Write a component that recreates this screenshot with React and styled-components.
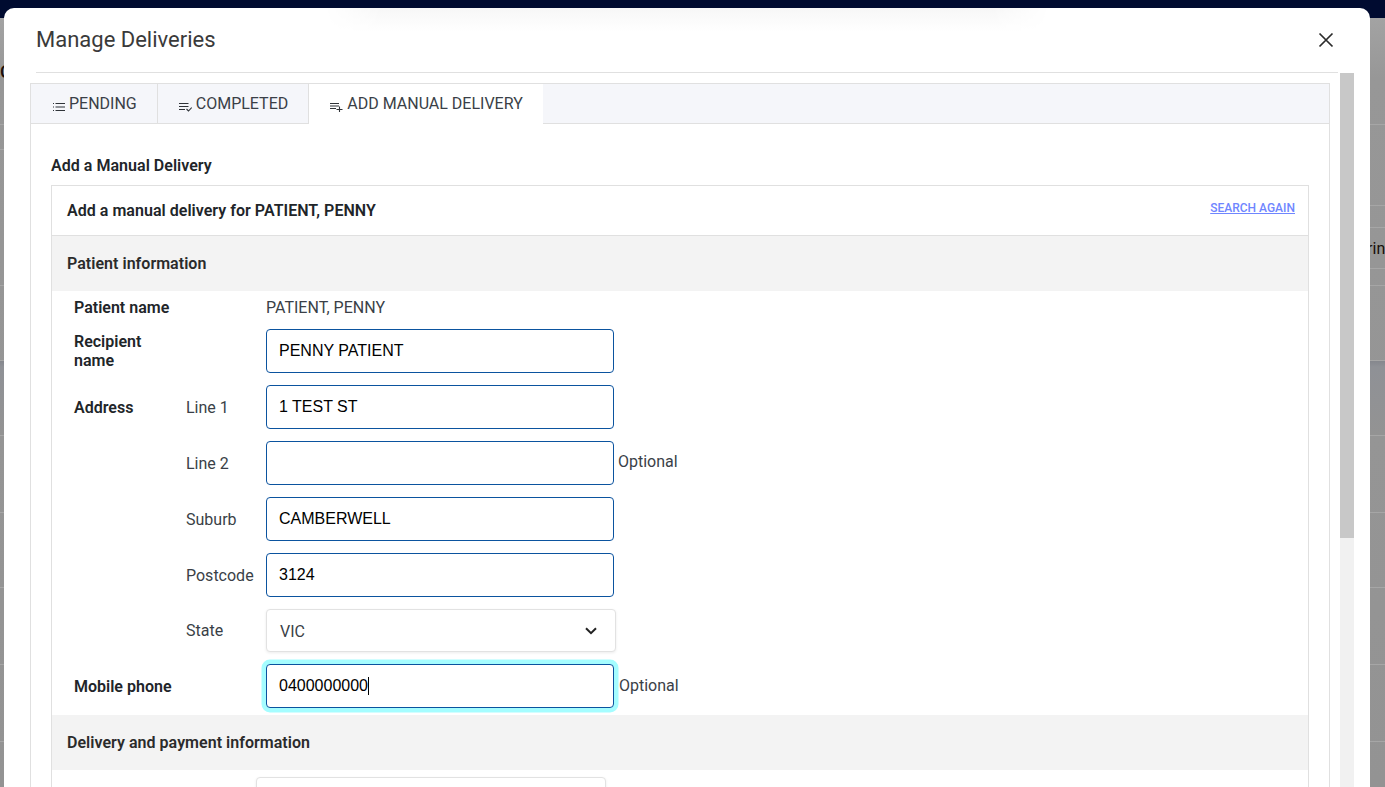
import React from "react";
import styled, { createGlobalStyle } from "styled-components";

const Global = createGlobalStyle`
  html, body { margin: 0; height: 100%; overflow: hidden; }
  body { font-family: Roboto, "Liberation Sans", sans-serif; font-size: 16px; color: #212529; }
  * { box-sizing: border-box; }
`;

const Page = styled.div`
  height: 787px;
  display: flex;
  flex-direction: column;
  background: #8f8f8f;
  overflow: hidden;
  position: relative;
`;
const NavBar = styled.div`
  height: 18px;
  flex: none;
  background: #000b30;
`;
const Behind = styled.div`
  flex: 1;
  display: flex;
  justify-content: space-between;
  overflow: hidden;
`;
const BehindColumn = styled.div`
  width: ${(p) => p.$w}px;
  display: flex;
  flex-direction: column;
  overflow: hidden;
  background: linear-gradient(180deg, #a3a3a3 0, #979797 60px, #939393 100%);
`;
const BehindRow = styled.div`
  height: ${(p) => p.$h}px;
  flex: none;
  border-bottom: 1px solid #a6a6a6;
  background: ${(p) => (p.$band ? "linear-gradient(180deg, #85878d, #8f9196 6px, #939393)" : "transparent")};
  font-size: ${(p) => p.$size || 16}px;
  font-weight: ${(p) => p.$weight || 400};
  line-height: 20px;
  white-space: nowrap;
  color: #1a0f08;
  padding-top: ${(p) => p.$pad || 0}px;
  margin-left: ${(p) => p.$shift || 0}px;
`;

const Modal = styled.div`
  position: absolute;
  left: 4px;
  top: 8px;
  width: 1366px;
  height: 800px;
  background: #fff;
  border-radius: 10px;
  display: flex;
  flex-direction: column;
  overflow: hidden;
  &::before {
    content: "";
    position: absolute;
    left: 320px;
    right: 320px;
    top: 0;
    height: 24px;
    background: linear-gradient(180deg, #f7f7f7, #fff);
    -webkit-mask-image: linear-gradient(90deg, transparent, #000 8%, #000 92%, transparent);
    mask-image: linear-gradient(90deg, transparent, #000 8%, #000 92%, transparent);
  }
`;
const ModalHeader = styled.header`
  position: relative;
  height: 65px;
  flex: none;
  margin: 0 32px;
  border-bottom: 1px solid #e0e0e0;
  display: flex;
  align-items: flex-start;
  justify-content: space-between;
  padding-top: 18px;
`;
const ModalTitle = styled.h1`
  margin: 0;
  font-size: 22px;
  font-weight: 400;
  line-height: 28px;
  color: #3a3a3a;
`;
const CloseButton = styled.button`
  border: 0;
  background: none;
  padding: 0;
  width: 16px;
  height: 16px;
  margin: 6px 4px 0 0;
  display: block;
`;
const ModalBody = styled.div`
  flex: 1;
  display: flex;
  gap: 10px;
  padding-left: 26px;
  overflow: hidden;
`;
const Scroller = styled.div`
  width: 1300px;
  flex: none;
  padding-top: 10px;
`;
const ScrollTrack = styled.div`
  width: 14px;
  flex: none;
  background: #f1f1f1;
`;
const ScrollThumb = styled.div`
  height: 465px;
  background: #c8c8c8;
`;
const TabBar = styled.div`
  display: flex;
  height: 41px;
  background: #f5f6fa;
  border: 1px solid #e0e0e0;
`;
const Tab = styled.div`
  display: flex;
  align-items: flex-start;
  height: ${(p) => (p.$active ? "40px" : "39px")};
  padding: 10px 20px 0 21px;
  line-height: 20px;
  font-size: 16px;
  color: #3a3f47;
  background: ${(p) => (p.$active ? "#fff" : "transparent")};
  border-right: ${(p) => (p.$active ? "0" : "1px solid #e0e0e0")};
  svg { margin: 8px 4px 0 0; flex: none; }
`;
const Panel = styled.div`
  border: 1px solid #e0e0e0;
  border-top: 0;
  padding: 32px 20px 20px;
  background: #fff;
`;
const PanelHeading = styled.h2`
  margin: 0 0 9px;
  font-size: 16px;
  line-height: 20px;
  font-weight: 600;
  letter-spacing: 0.03px;
  color: #212529;
`;
const Card = styled.section`
  border: 1px solid #e0e0e0;
  border-bottom: 0;
`;
const CardHeader = styled.div`
  height: 50px;
  padding: 0 13px 4px 15px;
  display: flex;
  align-items: center;
  justify-content: space-between;
  border-bottom: 1px solid #e0e0e0;
`;
const CardTitle = styled.h3`
  margin: 4px 0 0;
  font-size: 16px;
  font-weight: 600;
  letter-spacing: 0.03px;
  color: #212529;
`;
const SearchAgain = styled.a`
  font-size: 12px;
  font-weight: 500;
  color: #6f86ff;
  text-decoration: underline;
  margin-top: -2px;
`;
const SectionBar = styled.div`
  height: 55px;
  display: flex;
  align-items: center;
  padding-left: 15px;
  background: #f3f3f3;
  font-size: 16px;
  font-weight: 600;
  letter-spacing: 0.03px;
  color: #2b2b2b;
`;
const Form = styled.div`
  padding: 4px 0 7px 22px;
  display: flex;
  flex-direction: column;
  gap: 12px;
`;
const Row = styled.div`
  display: grid;
  grid-template-columns: 112px 80px auto 1fr;
  align-items: ${(p) => (p.$top ? "start" : "center")};
  margin-top: ${(p) => p.$mt || 0}px;
`;
const Label = styled.div`
  font-weight: 600;
  line-height: 19px;
  color: #212529;
  max-width: ${(p) => (p.$narrow ? "90px" : "none")};
  padding-top: ${(p) => (p.$narrow ? "3px" : "0")};
  white-space: ${(p) => (p.$narrow ? "normal" : "nowrap")};
`;
const SubLabel = styled.div`
  color: #3a3f47;
  line-height: 19px;
`;
const Value = styled.div`
  color: #3a3f47;
  line-height: 24px;
  padding-top: 1px;
  height: 24px;
`;
const TextInput = styled.input`
  display: block;
  width: 348px;
  height: 44px;
  padding: 0 12px;
  border: 1px solid #0b539f;
  border-radius: 4px;
  background: #fff;
  color: #000;
  font: 16px "Liberation Sans", Arial, sans-serif;
  outline: none;
`;
const FocusedInput = styled.div`
  width: 348px;
  height: 44px;
  padding: 0 12px;
  border: 1px solid #0b539f;
  border-radius: 4px;
  background: #fff;
  color: #000;
  font: 16px "Liberation Sans", Arial, sans-serif;
  box-shadow: 0 0 0 4.5px #a5fdff;
  display: flex;
  align-items: center;
`;
const Caret = styled.span`
  width: 1px;
  height: 18px;
  background: #000;
`;
const Hint = styled.span`
  color: #3a3f47;
  margin-left: ${(p) => p.$ml || 4}px;
  margin-top: ${(p) => p.$up || 0}px;
`;
const SelectBox = styled.div`
  width: ${(p) => p.$w || 350}px;
  height: ${(p) => p.$h || 43}px;
  margin-left: ${(p) => p.$ml || 0}px;
  border: 1px solid #e2e2e2;
  border-radius: 4px;
  background: #fff;
  box-shadow: 0 1px 3px rgba(0, 0, 0, 0.08);
  display: flex;
  align-items: center;
  justify-content: space-between;
  padding: 1px 18px 0 13px;
  color: #3a3f47;
`;
const NextFields = styled.div`
  padding: 7px 0 0 0;
`;

const ListIcon = () => (
  <svg width="13" height="10" viewBox="0 0 13 10" fill="none" stroke="#2f3338" strokeWidth="1.1">
    <path d="M1 1.5h1M1 5h1M1 8.5h1" />
    <path d="M3.5 1.5H13M3.5 5H13M3.5 8.5H13" />
  </svg>
);
const DoneIcon = () => (
  <svg width="13" height="10" viewBox="0 0 13 10" fill="none" stroke="#2f3338" strokeWidth="1.1">
    <path d="M0 1.5H9.5M0 4.5H9.5M0 7.5H6" />
    <path d="M7.5 7l2 2 3.2-3.5" />
  </svg>
);
const AddIcon = () => (
  <svg width="13" height="10" viewBox="0 0 13 10" fill="none" stroke="#2f3338" strokeWidth="1.1">
    <path d="M0 1.5H9M0 4H9M0 6.5H6" />
    <path d="M9.5 4.5v5.5M6.5 7.5h6" />
  </svg>
);
const CloseIcon = () => (
  <svg width="16" height="16" viewBox="0 0 16 16" fill="none" stroke="#2c2c2c" strokeWidth="1.7">
    <path d="M1.5 1.5l13 13M14.5 1.5l-13 13" />
  </svg>
);
const Chevron = () => (
  <svg width="12" height="8" viewBox="0 0 12 8" fill="none" stroke="#222" strokeWidth="2">
    <path d="M1 1.2l5 5 5-5" />
  </svg>
);

const leftRows = [
  { h: 25 }, { h: 136 }, { h: 75 }, { h: 75, band: true }, { h: 77 }, { h: 75 }, { h: 77 }, { h: 77 },
];
const rightRows = [
  { h: 107 }, { h: 81 }, { h: 22 }, { h: 41, pad: 11, shift: -13, text: "Print" }, { h: 17 }, { h: 75 }, { h: 75, band: true },
  { h: 77 }, { h: 75 }, { h: 77 }, { h: 77 },
];

export default function App() {
  return (
    <Page>
      <Global />
      <NavBar />
      <Behind>
        <BehindColumn $w={4}>
          <BehindRow $h={107} $pad={44} $size={18} $weight={500}>C</BehindRow>
          {leftRows.map((r, i) => (
            <BehindRow key={i} $h={r.h} $band={r.band} />
          ))}
        </BehindColumn>
        <BehindColumn $w={15}>
          {rightRows.map((r, i) => (
            <BehindRow key={i} $h={r.h} $band={r.band} $pad={r.pad} $shift={r.shift}>
              {r.text}
            </BehindRow>
          ))}
        </BehindColumn>
      </Behind>
      <Modal>
        <ModalHeader>
          <ModalTitle>Manage Deliveries</ModalTitle>
          <CloseButton aria-label="Close">
            <CloseIcon />
          </CloseButton>
        </ModalHeader>
        <ModalBody>
          <Scroller>
            <TabBar>
              <Tab><ListIcon />PENDING</Tab>
              <Tab><DoneIcon />COMPLETED</Tab>
              <Tab $active><AddIcon />ADD MANUAL DELIVERY</Tab>
            </TabBar>
            <Panel>
              <PanelHeading>Add a Manual Delivery</PanelHeading>
              <Card>
                <CardHeader>
                  <CardTitle>Add a manual delivery for PATIENT, PENNY</CardTitle>
                  <SearchAgain href="#">SEARCH AGAIN</SearchAgain>
                </CardHeader>
                <SectionBar>Patient information</SectionBar>
                <Form>
                  <Row>
                    <Label>Patient name</Label>
                    <span />
                    <Value>PATIENT, PENNY</Value>
                  </Row>
                  <Row $top $mt={-2}>
                    <Label $narrow>Recipient name</Label>
                    <span />
                    <TextInput readOnly value="PENNY PATIENT" />
                  </Row>
                  <Row>
                    <Label>Address</Label>
                    <SubLabel>Line 1</SubLabel>
                    <TextInput readOnly value="1 TEST ST" />
                  </Row>
                  <Row>
                    <span />
                    <SubLabel>Line 2</SubLabel>
                    <TextInput readOnly value="" />
                    <Hint $up={-4}>Optional</Hint>
                  </Row>
                  <Row>
                    <span />
                    <SubLabel>Suburb</SubLabel>
                    <TextInput readOnly value="CAMBERWELL" />
                  </Row>
                  <Row>
                    <span />
                    <SubLabel>Postcode</SubLabel>
                    <TextInput readOnly value="3124" />
                  </Row>
                  <Row>
                    <span />
                    <SubLabel>State</SubLabel>
                    <SelectBox>VIC<Chevron /></SelectBox>
                  </Row>
                  <Row>
                    <Label>Mobile phone</Label>
                    <span />
                    <FocusedInput>0400000000<Caret /></FocusedInput>
                    <Hint $ml={5} $up={-2}>Optional</Hint>
                  </Row>
                </Form>
                <SectionBar>Delivery and payment information</SectionBar>
                <NextFields>
                  <SelectBox $ml={204} $h={44} />
                </NextFields>
              </Card>
            </Panel>
          </Scroller>
          <ScrollTrack>
            <ScrollThumb />
          </ScrollTrack>
        </ModalBody>
      </Modal>
    </Page>
  );
}
